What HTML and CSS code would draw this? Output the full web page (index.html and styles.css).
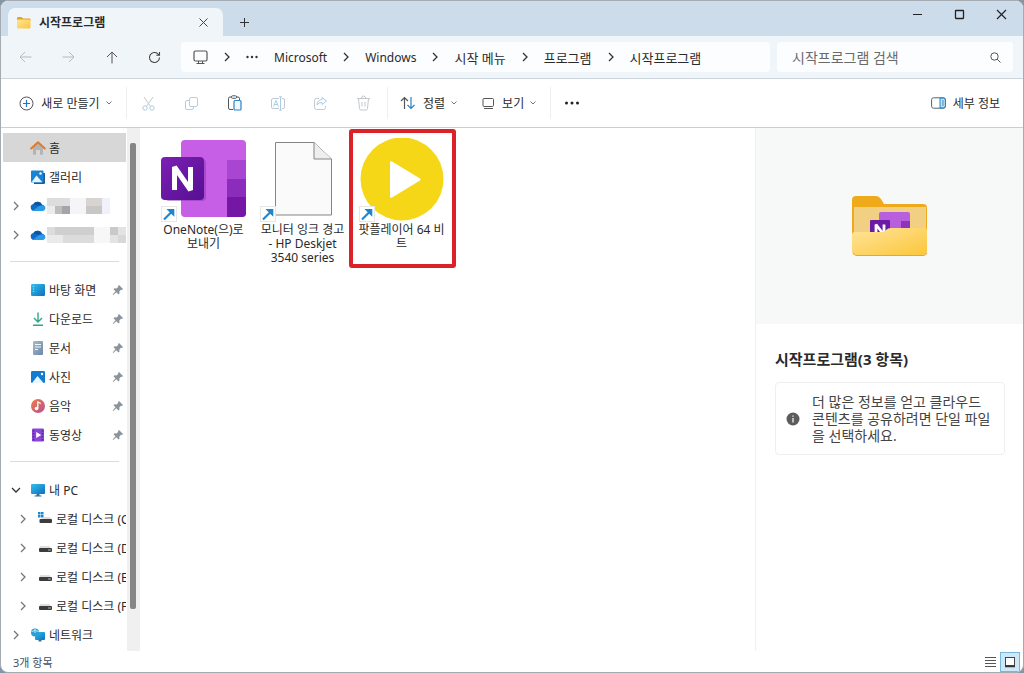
FILE: index.html
```html
<!DOCTYPE html>
<html lang="ko">
<head>
<meta charset="utf-8">
<meta name="viewport" content="width=device-width, initial-scale=1">
<title>시작프로그램</title>
<link rel="stylesheet" href="styles.css">
</head>
<body>
<svg class="defs" aria-hidden="true">
  <defs>
    <linearGradient id="gDesk" x1="0" y1="0" x2="1" y2="1"><stop offset="0" stop-color="#35c0ec"/><stop offset="1" stop-color="#0b6fc0"/></linearGradient>
    <linearGradient id="gMusic" x1="0" y1="0" x2="1" y2="1"><stop offset="0" stop-color="#ee7e4c"/><stop offset="1" stop-color="#b8508c"/></linearGradient>
    <linearGradient id="gNote" x1="0" y1="0" x2="1" y2="1"><stop offset="0" stop-color="#7c1fb4"/><stop offset="1" stop-color="#550f93"/></linearGradient>
    <linearGradient id="gFold" x1="0" y1="0" x2="1" y2="1"><stop offset="0" stop-color="#ffe49a"/><stop offset="1" stop-color="#fbc63a"/></linearGradient>
    <linearGradient id="gDoc" x1="0" y1="0" x2="1" y2="1"><stop offset="0" stop-color="#a5bbd0"/><stop offset="1" stop-color="#6d87a5"/></linearGradient>
  </defs>
  <symbol id="chev" viewBox="0 0 10 10"><path d="M3 1l4 4-4 4" fill="none" stroke="currentColor" stroke-width="1.3"/></symbol>
  <symbol id="down" viewBox="0 0 10 10"><path d="M2.500 3.500L5 6l2.500-2.500" fill="none" stroke="currentColor"/></symbol>
  <symbol id="pin" viewBox="0 0 12 12"><path d="M7 1l4 4-1 1-1-.3L7.300 7.400 7.500 9.500l-1 1L4.300 8.300 1.200 11l-.5-.5L3.500 7.300 1.500 5.300l1-1 2.100.2L6.300 2.800 6 2z" fill="#8b939b"/></symbol>
  <symbol id="cloud" viewBox="0 0 16 12"><path d="M4 11a3.500 3.500 0 0 1-.6-6.900A4.800 4.800 0 0 1 12 4.600 3.300 3.300 0 0 1 12.500 11z" fill="#0f6cc6"/><path d="M3 10.600L9 6l4.500-.8A3 3 0 0 1 12.500 11H4z" fill="#2b9be8"/><path d="M3.400 4.100A4.800 4.800 0 0 1 12 4.600L8.500 6z" fill="#0b56a4"/></symbol>
  <symbol id="drive" viewBox="0 0 16 16"><path d="M3.500 6h9L14 9H2z" fill="#dedede"/><rect x="2" y="8" width="13" height="4" rx="1" fill="#3c3c3c"/><rect x="11" y="9.500" width="3" height="1" fill="#9fb7b0"/></symbol>
  <symbol id="link" viewBox="0 0 16 16"><rect x=".5" y=".5" width="15" height="15" fill="#fff" stroke="#e6e6e6"/><path d="M3 13.500L10 6.500" fill="none" stroke="#1f86cc" stroke-width="2.200"/><path d="M5.500 3H13.300v7.800L10.900 8.400 7.900 5.400z" fill="#1f86cc"/></symbol>
</svg>
<div class="window">
  <header class="titlebar">
    <div class="tab">
      <svg width="15" height="13" viewBox="0 0 15 13"><path d="M1 2q0-1 1-1h3.500L7 2.500h6.500q1 0 1 1V5H1z" fill="#e9a21c"/><rect x="1" y="3.500" width="13.500" height="9" rx="1" fill="url(#gFold)"/></svg>
      <span class="tab-title">시작프로그램</span>
      <button class="plain" aria-label="탭 닫기"><svg width="9" height="9" viewBox="0 0 9 9"><path d="M.5.500l8 8M8.500.500l-8 8" stroke="#444"/></svg></button>
    </div>
    <button class="plain new-tab" aria-label="새 탭"><svg width="11" height="11" viewBox="0 0 11 11"><path d="M5.500 1v9M1 5.500h9" stroke="#333"/></svg></button>
    <div class="controls">
      <button class="plain" aria-label="최소화"><svg width="11" height="11" viewBox="0 0 11 11"><path d="M1 5.500h9" stroke="#222"/></svg></button>
      <button class="plain" aria-label="최대화"><svg width="11" height="11" viewBox="0 0 11 11"><rect x="1.500" y="1.500" width="8" height="8" rx=".5" fill="none" stroke="#222" stroke-width="1.300"/></svg></button>
      <button class="plain" aria-label="닫기"><svg width="11" height="11" viewBox="0 0 11 11"><path d="M1 1l9 9M10 1l-9 9" stroke="#222" stroke-width="1.200"/></svg></button>
    </div>
  </header>

  <div class="navbar">
    <div class="nav-buttons">
      <button class="plain" aria-label="뒤로" disabled><svg width="13" height="12" viewBox="0 0 13 12"><path d="M12.500 6H1M6 1L1 6l5 5" fill="none" stroke="#b3bac1"/></svg></button>
      <button class="plain" aria-label="앞으로" disabled><svg width="13" height="12" viewBox="0 0 13 12"><path d="M.5 6H12M7 1l5 5-5 5" fill="none" stroke="#b3bac1"/></svg></button>
      <button class="plain" aria-label="위로"><svg width="12" height="13" viewBox="0 0 12 13"><path d="M6 12.500V1M1 6l5-5 5 5" fill="none" stroke="#555"/></svg></button>
      <button class="plain" aria-label="새로 고침"><svg width="13" height="13" viewBox="0 0 13 13"><path d="M11.500 6.500a5 5 0 1 1-1.600-3.700L11.500 4.200M11.500 1v3.200H8.300" fill="none" stroke="#444" stroke-width="1.100"/></svg></button>
    </div>
    <nav class="crumbs" aria-label="경로">
      <svg width="15" height="15" viewBox="0 0 15 15"><rect x="1" y="1" width="13" height="10" rx="1.500" fill="none" stroke="#555" stroke-width="1.200"/><path d="M5.500 11v2.500M9.500 11v2.500M3.500 13.500h8" stroke="#555" fill="none"/></svg>
      <svg class="sep"><use href="#chev"/></svg>
      <svg class="dots" width="12" height="4" viewBox="0 0 12 4"><g fill="#333"><circle cx="1.500" cy="2" r="1.200"/><circle cx="6" cy="2" r="1.200"/><circle cx="10.500" cy="2" r="1.200"/></g></svg>
      <a href="#" class="latin">Microsoft</a>
      <svg class="sep"><use href="#chev"/></svg>
      <a href="#" class="latin">Windows</a>
      <svg class="sep"><use href="#chev"/></svg>
      <a href="#">시작 메뉴</a>
      <svg class="sep"><use href="#chev"/></svg>
      <a href="#">프로그램</a>
      <svg class="sep"><use href="#chev"/></svg>
      <a href="#">시작프로그램</a>
    </nav>
    <form class="search">
      <input type="search" aria-label="시작프로그램 검색" placeholder="시작프로그램 검색">
      <svg width="11" height="11" viewBox="0 0 11 11"><circle cx="4.500" cy="4.500" r="3.700" fill="none" stroke="#555"/><path d="M7.200 7.200l3.300 3.300" stroke="#555"/></svg>
    </form>
  </div>

  <div class="toolbar">
    <button class="plain cmd new"><svg width="15" height="15" viewBox="0 0 15 15"><circle cx="7.500" cy="7.500" r="6.500" fill="none" stroke="#555"/><path d="M7.500 4v7M4 7.500h7" stroke="#1b78c8" stroke-width="1.200"/></svg>새로 만들기<svg class="drop"><use href="#down"/></svg></button>
    <div class="icons">
      <button class="plain" aria-label="잘라내기" disabled><svg width="15" height="15" viewBox="0 0 15 15"><path d="M3 1l6.500 9.500M12 1L5.500 10.500" stroke="#c3c9ce" fill="none"/><circle cx="4" cy="12" r="2.200" fill="none" stroke="#a9cbe4"/><circle cx="11" cy="12" r="2.200" fill="none" stroke="#a9cbe4"/></svg></button>
      <button class="plain" aria-label="복사" disabled><svg width="15" height="15" viewBox="0 0 15 15"><rect x="5.500" y="1.500" width="8" height="9" rx="1.500" fill="none" stroke="#b4cfe3"/><path d="M5 4.500H3Q1.500 4.500 1.500 6v6q0 1.500 1.500 1.500h5q1.500 0 1.500-1.500v-1" fill="none" stroke="#c3c9ce"/></svg></button>
      <button class="plain" aria-label="붙여넣기"><svg width="15" height="16" viewBox="0 0 15 16"><path d="M6 14.500H3q-1.500 0-1.500-1.500V3.500Q1.500 2 3 2h8q1.500 0 1.500 1.500V5" fill="none" stroke="#555"/><rect x="4.500" y=".8" width="5" height="2.500" rx="1" fill="#fff" stroke="#555"/><rect x="7" y="5.500" width="7" height="9.500" rx="1" fill="#eef7fd" stroke="#2c82c4" stroke-width="1.200"/></svg></button>
      <button class="plain" aria-label="이름 바꾸기" disabled><svg width="16" height="15" viewBox="0 0 16 15"><path d="M9 2.500H3Q1.500 2.500 1.500 4v7q0 1.500 1.500 1.500h6M12 2.500h1q1.500 0 1.500 1.500v7q0 1.500-1.500 1.500h-1" fill="none" stroke="#c0c9d0"/><path d="M10.500 1v13M9 .8h3M9 14.200h3M3.500 10.500L6 4.500l2.500 6M4.500 8.500h3" fill="none" stroke="#a9cbe4"/></svg></button>
      <button class="plain" aria-label="공유" disabled><svg width="15" height="15" viewBox="0 0 15 15"><path d="M6 2.500H3.500q-2 0-2 2v7q0 2 2 2h7q2 0 2-2V10" fill="none" stroke="#c3c9ce"/><path d="M9 1.500l4.500 3.500L9 8.500v-2q-3.500-.5-5 2.500 0-5 5-5.500z" fill="none" stroke="#a9cbe4" stroke-linejoin="round"/></svg></button>
      <button class="plain" aria-label="삭제" disabled><svg width="15" height="16" viewBox="0 0 15 16"><path d="M1 3.500h13M5.500 3Q5.500 1 7.500 1t2 2M2.500 3.500l1 10q.1 1.500 1.500 1.500h5q1.400 0 1.500-1.500l1-10M6 7v4.500M9 7v4.500" fill="none" stroke="#c3c7ca"/></svg></button>
    </div>
    <div class="group">
      <button class="plain cmd"><svg width="16" height="14" viewBox="0 0 16 14"><path d="M4.500 13V1.500M1 5l3.500-3.500L8 5" fill="none" stroke="#555" stroke-width="1.200"/><path d="M11 1v11.500M7.500 9l3.500 3.500L14.500 9" fill="none" stroke="#2584cc" stroke-width="1.200"/></svg>정렬<svg class="drop"><use href="#down"/></svg></button>
      <button class="plain cmd"><svg width="13" height="13" viewBox="0 0 13 13"><rect x="1" y="1.500" width="10.500" height="8" rx="1" fill="none" stroke="#555"/><path d="M2 11.500h9" stroke="#555"/></svg>보기<svg class="drop"><use href="#down"/></svg></button>
    </div>
    <button class="plain more" aria-label="더 보기"><svg width="16" height="4" viewBox="0 0 16 4"><g fill="#222"><circle cx="2.500" cy="2" r="1.500"/><circle cx="8" cy="2" r="1.500"/><circle cx="13.500" cy="2" r="1.500"/></g></svg></button>
    <button class="plain cmd details-toggle"><svg width="15" height="12" viewBox="0 0 15 12"><rect x="9" y="1" width="5" height="10" fill="#bfe2f7"/><rect x=".6" y=".8" width="13.800" height="10.400" rx="2" fill="none" stroke="#55646f"/><path d="M9 1h3.500q2 0 2 2v6q0 2-2 2H9zM11 4h1.800M11 6h1.800M11 8h1.800" fill="none" stroke="#2584cc"/></svg>세부 정보</button>
  </div>

  <div class="content">
    <aside class="sidebar">
      <div class="tree">
        <a href="#" class="row selected"><svg width="16" height="16" viewBox="0 0 16 16"><path d="M3 7.500L8 3l5 4.500V14q0 .8-.8.8H10V10H6v4.800H3.800Q3 14.800 3 14z" fill="#b4b4b4"/><path d="M1.200 8.500L8 2.200l6.800 6.300" fill="none" stroke="#de7a2c" stroke-width="2" stroke-linecap="round" stroke-linejoin="round"/></svg><span>홈</span></a>
        <a href="#" class="row"><svg width="16" height="16" viewBox="0 0 16 16"><path d="M4 4h11v10q0 1-1 1H4z" fill="#1b5d9d"/><rect x="1" y="1.500" width="12.500" height="12" rx="1" fill="#1683d4"/><path d="M1.500 13.300L6.500 6.500l5.800 6.800z" fill="#e6f5ff"/><circle cx="10.500" cy="4.500" r="1.200" fill="#fff"/></svg><span>갤러리</span></a>
        <a href="#" class="row" aria-label="OneDrive"><svg class="arrow"><use href="#chev"/></svg><svg width="16" height="12"><use href="#cloud"/></svg><svg class="mosaic" width="63" height="16" viewBox="0 0 63 16"><path fill="#dedddd" d="M0 0h23v16H0z"/><path fill="#ececec" d="M0 8h8v8H0z"/><path fill="#bdbdbf" d="M8 8h7v8H8z"/><path fill="#a5a5a9" d="M15 8h8v8h-8z"/><path fill="#f5f5f7" d="M23 0h16v16H23z"/><path fill="#d8d4d2" d="M39 0h16v8H39z"/><path fill="#c9c7c6" d="M39 8h16v8H39z"/><path fill="#f0f1fa" d="M55 0h8v16h-8z"/></svg></a>
        <a href="#" class="row" aria-label="OneDrive"><svg class="arrow"><use href="#chev"/></svg><svg width="16" height="12"><use href="#cloud"/></svg><svg class="mosaic" width="79" height="16" viewBox="0 0 79 16"><path fill="#dcdcdd" d="M0 0h47v16H0z"/><path fill="#cfcfd0" d="M8 0h39v8H8z"/><path fill="#eaeaea" d="M0 8h16v8H0z"/><path fill="#f7f7f7" d="M47 0h16v16H47z"/><path fill="#c9c9cb" d="M63 0h8v8h-8z"/><path fill="#e3e3e3" d="M71 0h8v8h-8zM63 8h8v8h-8z"/><path fill="#d8d8d8" d="M71 8h8v8h-8z"/></svg></a>
        <hr>
        <a href="#" class="row"><svg width="16" height="16" viewBox="0 0 16 16"><rect x="1" y="2" width="14" height="12" rx="1.200" fill="url(#gDesk)"/><path d="M3 4.500h1.200M3 7h1.200M3 9.500h1.200" stroke="#8fdcf5"/></svg><span>바탕 화면</span><svg class="pin"><use href="#pin"/></svg></a>
        <a href="#" class="row"><svg width="16" height="16" viewBox="0 0 16 16"><path d="M8 1.500v9.500M4 7l4 4 4-4M3 14.300h10" fill="none" stroke="#2aa889" stroke-width="1.400"/></svg><span>다운로드</span><svg class="pin"><use href="#pin"/></svg></a>
        <a href="#" class="row"><svg width="16" height="16" viewBox="0 0 16 16"><rect x="3" y="1" width="10" height="14" rx="1" fill="url(#gDoc)"/><path d="M5 4.500h6M5 7h6M5 9.500h3" stroke="#f1f6fb" stroke-width="1.200"/></svg><span>문서</span><svg class="pin"><use href="#pin"/></svg></a>
        <a href="#" class="row"><svg width="16" height="16" viewBox="0 0 16 16"><rect x="1" y="2" width="14" height="12" rx="1.200" fill="#137bd0"/><path d="M2 14l5.500-7 6 7z" fill="#e8f6ff"/><circle cx="12" cy="5" r="1.200" fill="#fff"/></svg><span>사진</span><svg class="pin"><use href="#pin"/></svg></a>
        <a href="#" class="row"><svg width="16" height="16" viewBox="0 0 16 16"><circle cx="8" cy="8" r="7" fill="url(#gMusic)"/><circle cx="6.500" cy="10.500" r="1.800" fill="#fff"/><path d="M7.800 10.500V4l3 1.500" fill="none" stroke="#fff" stroke-width="1.300"/></svg><span>음악</span><svg class="pin"><use href="#pin"/></svg></a>
        <a href="#" class="row"><svg width="16" height="16" viewBox="0 0 16 16"><rect x="2" y="1.500" width="12" height="13" rx="1.200" fill="#8a44d6"/><path d="M3.500 3v11M12.500 3v11" stroke="#5c22a4" stroke-width="1.500" stroke-dasharray="1.500 1.500"/><path d="M6.200 5l5 3-5 3z" fill="#fff"/></svg><span>동영상</span><svg class="pin"><use href="#pin"/></svg></a>
        <hr>
        <a href="#" class="row"><svg class="arrow open"><use href="#chev"/></svg><svg width="16" height="16" viewBox="0 0 16 16"><rect x="1" y="2" width="14" height="10" rx="1" fill="url(#gDesk)"/><path d="M6.500 12h3v1.500h2v1h-7v-1h2z" fill="#34709e"/></svg><span>내 PC</span></a>
        <a href="#" class="row child"><svg class="arrow"><use href="#chev"/></svg><svg width="16" height="16" viewBox="0 0 16 16"><path d="M1 1h2.500v2.500H1zM4 1h2.500v2.500H4zM1 4h2.500v2.500H1zM4 4h2.500v2.500H4z" fill="#1789d4"/><path d="M7 6h6l1.500 3H3z" fill="#dedede"/><rect x="2.500" y="8" width="12.500" height="4" rx="1" fill="#3c3c3c"/></svg><span>로컬 디스크 (C</span></a>
        <a href="#" class="row child"><svg class="arrow"><use href="#chev"/></svg><svg width="16" height="16"><use href="#drive"/></svg><span>로컬 디스크 (D</span></a>
        <a href="#" class="row child"><svg class="arrow"><use href="#chev"/></svg><svg width="16" height="16"><use href="#drive"/></svg><span>로컬 디스크 (E</span></a>
        <a href="#" class="row child"><svg class="arrow"><use href="#chev"/></svg><svg width="16" height="16"><use href="#drive"/></svg><span>로컬 디스크 (F</span></a>
        <a href="#" class="row"><svg class="arrow"><use href="#chev"/></svg><svg width="16" height="16" viewBox="0 0 16 16"><rect x="5" y="5" width="10" height="8" rx="1" fill="url(#gDesk)"/><path d="M8.500 13h3v1.500h-3z" fill="#34709e"/><circle cx="5" cy="5.500" r="4" fill="#2a9ed6"/><path d="M1.500 4.500q3.500-2 7 0M5 1.500v4.500" stroke="#b9e8fa" fill="none"/></svg><span>네트워크</span></a>
      </div>
      <div class="scroll"><div class="thumb"></div></div>
    </aside>

    <main class="files">
      <button class="plain file"><span class="art">
        <svg width="86" height="84" viewBox="0 0 86 84"><rect x="20" y="2" width="65" height="77" rx="4" fill="#c65fe6"/><path d="M66 22h19v19H66z" fill="#a846d2"/><path d="M66 41h19v18H66z" fill="#8c2cbc"/><path d="M66 59h19v16q0 4-4 4H66z" fill="#7417a5"/><rect x="4" y="21" width="41" height="42" rx="4" fill="#8a35b5" opacity=".5"/><rect x="0" y="19" width="43" height="43" rx="4" fill="url(#gNote)"/><path d="M13.500 52V29L29.500 52V29" fill="none" stroke="#fff" stroke-width="5" stroke-linejoin="bevel"/></svg>
        <svg class="link"><use href="#link"/></svg></span><span class="name">OneNote(으)로 보내기</span></button>
      <button class="plain file"><span class="art">
        <svg width="86" height="84" viewBox="0 0 86 84"><path d="M15.500 4.500H54L71.500 21v56h-56z" fill="#fafafa" stroke="#858585"/><path d="M54 4.500V21h17.500" fill="#eee" stroke="#858585"/></svg>
        <svg class="link"><use href="#link"/></svg></span><span class="name">모니터 잉크 경고 - HP Deskjet 3540 series</span></button>
      <button class="plain file marked"><span class="art">
        <svg width="86" height="84" viewBox="0 0 86 84"><circle cx="43" cy="41" r="41.500" fill="#f6d717"/><path d="M31 24.500v34q0 2 2 1L61 42.500q1.500-1 0-2L33 23.500q-2-1-2 1z" fill="#fff"/></svg>
        <svg class="link"><use href="#link"/></svg></span><span class="name">팟플레이어 64 비트</span></button>
    </main>

    <section class="details">
      <div class="preview">
        <svg width="78" height="62" viewBox="0 0 78 62"><path d="M1 5q0-4 4-4h20q3 0 5 3l3 5h39q4 0 4 4v30H1z" fill="#efaa1c"/><rect x="3" y="12" width="72" height="30" fill="#f1d083"/><rect x="28" y="17" width="31" height="24" rx="2" fill="#b75fdc"/><rect x="50" y="26" width="9" height="12" fill="#8f33bd"/><rect x="19" y="25" width="20" height="18" rx="1" fill="#6a1aa3"/><path d="M25 40V29.500L33 40V29.500" fill="none" stroke="#fff" stroke-width="2.800" stroke-linejoin="bevel"/><path d="M1 40q0-3 3-3h26q3 0 5-2t5-2h33q3 0 3 3v20q0 4-4 4H5q-4 0-4-4z" fill="url(#gFold)"/><path d="M2 58q1 2.500 4 2.500h66q3 0 4-2.500" fill="none" stroke="#dfa838"/></svg>
      </div>
      <h1>시작프로그램(3 항목)</h1>
      <div class="note">
        <svg width="14" height="14" viewBox="0 0 14 14"><circle cx="7" cy="7" r="6.500" fill="#5c5c5c"/><path d="M7 6v4.500M7 3.500v1.300" stroke="#fff" stroke-width="1.200"/></svg>
        <p>더 많은 정보를 얻고 클라우드 콘텐츠를 공유하려면 단일 파일을 선택하세요.</p>
      </div>
    </section>
  </div>

  <footer class="status">
    <span>3개 항목</span>
    <div class="views">
      <button class="plain" aria-label="자세히"><svg width="11" height="11" viewBox="0 0 11 11"><path d="M0 1.500h11M0 4.500h11M0 7.500h11M0 10.500h11" stroke="#555"/></svg></button>
      <button class="plain active" aria-label="큰 아이콘"><svg width="12" height="12" viewBox="0 0 12 12"><rect x="1.500" y="1.500" width="9" height="8" fill="#fff" stroke="#444"/><path d="M1 10.500h10" stroke="#333" stroke-width="1.500"/></svg></button>
    </div>
  </footer>
</div>
</body>
</html>
```
FILE: styles.css
```css
* { box-sizing: border-box; }

body {
  margin: 0;
  background: #8496a5;
  color: #2a2a2a;
  font-family: "Noto Sans", "Noto Sans CJK KR", sans-serif;
  font-size: 12px;
}

a { color: inherit; text-decoration: none; }
svg { flex: none; display: block; }
.defs { position: absolute; width: 0; height: 0; }

.plain {
  display: flex;
  align-items: center;
  justify-content: center;
  padding: 0;
  border: 0;
  background: none;
  color: inherit;
  font: inherit;
}

.window {
  display: flex;
  flex-direction: column;
  height: 100vh;
  overflow: hidden;
  border: 1px solid #a5abb0;
  border-radius: 8px;
  background: #fff;
}

/* Title bar */
.titlebar {
  display: flex;
  height: 35px;
  background: #cddceb;
}

.tab {
  display: flex;
  align-items: center;
  width: 215px;
  margin: 7px 0 0 7px;
  padding: 0 15px 0 8px;
  border-radius: 7px 7px 0 0;
  background: #f0f5fa;
}

.tab-title {
  flex: 1;
  margin-left: 8px;
  font-weight: 600;
}

.new-tab { width: 42px; padding-top: 7px; }

.controls {
  display: flex;
  margin-left: auto;
  padding-right: 1px;
  height: 26px;
}

.controls .plain { width: 42px; }

/* Navigation */
.navbar {
  display: flex;
  align-items: center;
  height: 43px;
  padding: 0 10px 0 3px;
  border-bottom: 1px solid #cdd5dc;
  background: #f0f5fa;
}

.nav-buttons { display: flex; }
.nav-buttons .plain { width: 43px; height: 30px; }

.crumbs {
  display: flex;
  flex: 1;
  align-items: center;
  height: 30px;
  margin-left: 5px;
  padding-left: 12px;
  border-radius: 4px;
  background: #fcfdfe;
  font-size: 13px;
  white-space: nowrap;
}

.crumbs .latin { font-size: 12px; }
.sep { width: 10px; height: 10px; margin: 0 14px; color: #333; }
.crumbs .dots { margin-right: 16px; }

.search {
  display: flex;
  align-items: center;
  width: 236px;
  height: 30px;
  margin-left: 7px;
  padding: 0 12px 0 15px;
  border-radius: 4px;
  background: #fcfdfe;
}

.search input {
  flex: 1;
  min-width: 0;
  padding: 0;
  border: 0;
  outline: 0;
  background: none;
  font: inherit;
  font-size: 14px;
}

.search input::placeholder { color: #6a6a6a; }

/* Command bar */
.toolbar {
  display: flex;
  align-items: center;
  height: 49px;
  border-bottom: 1px solid #c8cfd2;
}

.cmd { gap: 7px; white-space: nowrap; }
.drop { width: 10px; height: 10px; margin-left: -3px; color: #777; }
.new { width: 125px; padding-left: 6px; }

.icons {
  display: flex;
  padding: 8px 2px 8px 0;
  border: solid #efefef;
  border-width: 0 1px;
}

.icons .plain { width: 43px; height: 16px; }

.group {
  display: flex;
  gap: 23px;
  padding: 7px 12px;
  border-right: 1px solid #efefef;
}

.more { width: 42px; height: 30px; }
.details-toggle { margin: 0 23px 0 auto; }

/* Content */
.content {
  display: flex;
  flex: 1;
  min-height: 0;
}

.sidebar {
  display: flex;
  width: 139px;
  overflow: hidden;
}

.tree {
  flex: 1;
  min-width: 0;
  padding: 5px 1px 0 2px;
  overflow: hidden;
}

.tree hr {
  height: 1px;
  margin: 12px 7px 13px;
  border: 0;
  background: #dcdcdc;
}

.row {
  display: grid;
  grid-template-columns: 27px 16px 1fr auto;
  align-items: center;
  height: 29px;
  overflow: hidden;
  white-space: nowrap;
}

.row > :not(.arrow):first-child { grid-column-start: 2; }
.row span { margin-left: 3px; }
.child { grid-template-columns: 34px 16px 1fr; }
.row.selected { background: #d7d7d7; }
.arrow { width: 10px; height: 10px; margin-left: 8px; color: #777; }
.child .arrow { margin-left: 15px; }
.arrow.open { transform: rotate(90deg); color: #333; }
.mosaic { margin-left: 1px; }
.pin { width: 12px; height: 12px; margin-right: 2px; }

.scroll {
  width: 13px;
  padding: 15px 3px 42px;
  background: #f0f0f0;
}

.thumb {
  width: 6px;
  height: 100%;
  border-radius: 2px;
  background: #868686;
}

.files {
  display: flex;
  flex: 1;
  align-items: flex-start;
  padding: 10px 0 0 14px;
}

.file {
  position: relative;
  flex-direction: column;
  gap: 1px;
  width: 99px;
}

.art { position: relative; }

.link {
  position: absolute;
  left: 0;
  bottom: 0;
  width: 16px;
  height: 16px;
}

.name {
  width: 88px;
  line-height: 14px;
}

.marked::after {
  content: "";
  position: absolute;
  inset: -9px -5px -17px -3px;
  border: 4px solid #dc2229;
  border-radius: 3px;
}

/* Details pane */
.details {
  width: 268px;
  border-left: 1px solid #f0f0f0;
}

.preview {
  display: grid;
  place-items: center;
  height: 196px;
  background: #f7f8f8;
}

.details h1 {
  margin: 25px 19px 13px;
  font-size: 15px;
  line-height: 20px;
}

.note {
  display: flex;
  align-items: center;
  gap: 12px;
  margin: 0 18px 0 19px;
  padding: 10px;
  border: 1px solid #efefef;
  border-radius: 4px;
}

.note p {
  margin: 0;
  color: #444;
  font-size: 14px;
  line-height: 17px;
}

/* Status bar */
.status {
  display: flex;
  align-items: center;
  justify-content: space-between;
  height: 21px;
  padding: 0 3px 0 12px;
  color: #41505f;
  font-size: 11px;
}

.views { display: flex; }
.views .plain { width: 20px; height: 20px; }
.views .active { border: 1px solid #79b6dc; background: #cde8f8; }
```
